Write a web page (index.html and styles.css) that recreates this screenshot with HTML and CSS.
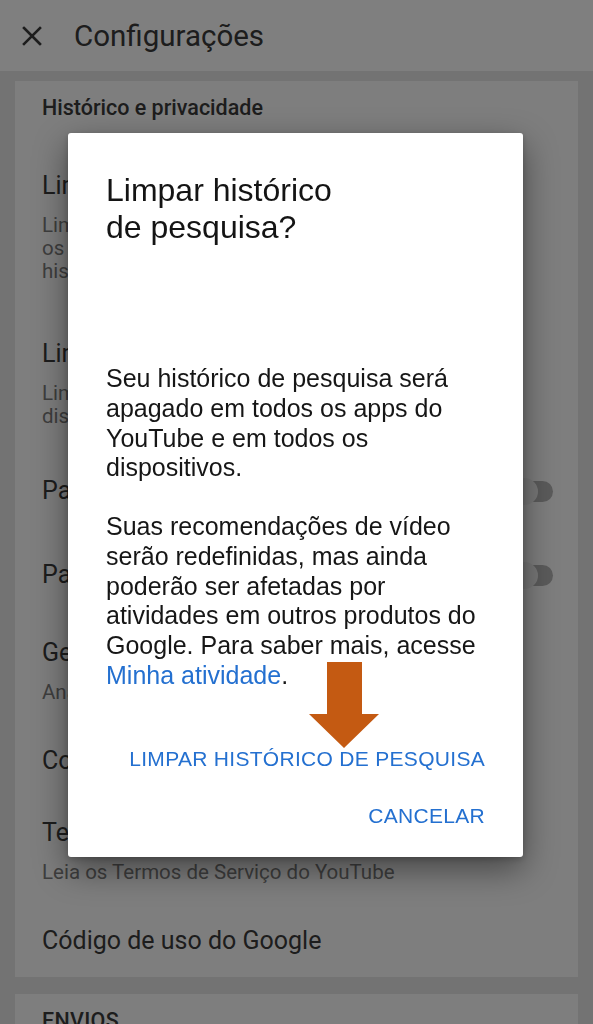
FILE: index.html
```html
<!DOCTYPE html>
<html lang="pt-BR">
<head>
<meta charset="utf-8">
<title>Configurações</title>
<link rel="stylesheet" href="styles.css">
</head>
<body>
<div class="app">
  <header class="appbar">
    <svg class="close-icon" viewBox="0 0 22 22" width="22" height="22" aria-hidden="true">
      <path d="M3 3 L19 19 M19 3 L3 19" stroke="#3a3a3a" stroke-width="2.6" stroke-linecap="square" fill="none"/>
    </svg>
    <h1 class="appbar-title">Configurações</h1>
  </header>

  <main class="content">
    <section class="card">
      <h2 class="card-head">Histórico e privacidade</h2>

      <div class="row row-first">
        <div class="row-text">
          <div class="row-title">Limpar histórico de exibição</div>
          <div class="row-sub">Limpa o histórico de exibição de todos os apps do<br>os dispositivos e redefine recomendações do vídeo<br>histórico de exibição</div>
        </div>
      </div>

      <div class="row">
        <div class="row-text">
          <div class="row-title">Limpar histórico de pesquisa</div>
          <div class="row-sub">Limpa as pesquisas de todos os apps e de todos os<br>dispositivos</div>
        </div>
      </div>

      <div class="row row-switch">
        <div class="row-text">
          <div class="row-title">Pausar histórico de exibição</div>
        </div>
        <span class="switch"><span class="switch-thumb"></span></span>
      </div>

      <div class="row row-switch">
        <div class="row-text">
          <div class="row-title">Pausar histórico de pesquisa</div>
        </div>
        <span class="switch"><span class="switch-thumb"></span></span>
      </div>

      <div class="row">
        <div class="row-text">
          <div class="row-title">Gerenciar todas as atividades</div>
          <div class="row-sub">Analise e gerencie as atividades da sua conta</div>
        </div>
      </div>

      <div class="row">
        <div class="row-text">
          <div class="row-title">Controles de dados do YouTube</div>
        </div>
      </div>

      <div class="row">
        <div class="row-text">
          <div class="row-title">Termos de Serviço do YouTube</div>
          <div class="row-sub">Leia os Termos de Serviço do YouTube</div>
        </div>
      </div>

      <div class="row">
        <div class="row-text">
          <div class="row-title">Código de uso do Google</div>
        </div>
      </div>
    </section>

    <section class="card">
      <h2 class="card-head card-head-caps">ENVIOS</h2>
      <div class="row">
        <div class="row-text">
          <div class="row-title">Qualidade do envio</div>
        </div>
      </div>
    </section>
  </main>
</div>

<div class="scrim"></div>

<div class="dialog" role="dialog">
  <h2 class="dialog-title">Limpar histórico de pesquisa?</h2>
  <div class="dialog-body">
    <p>Seu histórico de pesquisa será apagado em todos os apps do YouTube e em todos os dispositivos.</p>
    <p>Suas recomendações de vídeo serão redefinidas, mas ainda poderão ser afetadas por atividades em outros produtos do Google. Para saber mais, acesse <a class="link" href="#">Minha atividade</a>.</p>
  </div>
  <div class="actions">
    <button class="action-btn" type="button">LIMPAR HISTÓRICO DE PESQUISA</button>
    <button class="action-btn" type="button">CANCELAR</button>
  </div>
  <svg class="pointer-arrow" viewBox="0 0 70 86" width="70" height="86" aria-hidden="true">
    <polygon points="18,0 53,0 53,52 70,52 35,86 0,52 18,52" fill="#c45a12"/>
  </svg>
</div>
</body>
</html>
```

FILE: styles.css
```css
* { box-sizing: border-box; }

html, body {
  margin: 0;
  padding: 0;
}

body {
  width: 593px;
  height: 1024px;
  overflow: hidden;
  background: #e7e7e7;
  font-family: Roboto, "Noto Sans", "Liberation Sans", sans-serif;
  position: relative;
}

.appbar {
  height: 71px;
  background: #ffffff;
  display: flex;
  align-items: center;
  padding-left: 21px;
}

.close-icon {
  display: block;
  flex: none;
}

.appbar-title {
  margin: 0 0 0 31px;
  font-size: 29.5px;
  line-height: 36px;
  font-weight: 400;
  color: #3a3a3a;
}

.content {
  padding: 10px 15px;
  display: flex;
  flex-direction: column;
  gap: 17px;
}

.card {
  background: #fdfdfd;
}

.card-head {
  margin: 0;
  padding: 15px 27px 30px;
  font-size: 21.5px;
  line-height: 24px;
  font-weight: 500;
  color: #3a3a3a;
}

.card-head-caps {
  letter-spacing: 0.3px;
}

.row {
  display: flex;
  align-items: center;
  justify-content: space-between;
  padding: 21px 25px 21px 27px;
}

.row-first {
  padding-bottom: 35px;
}

.row-switch {
  padding-top: 27px;
  padding-bottom: 27px;
}

.row-title {
  font-size: 25px;
  line-height: 30px;
  color: #3a3a3a;
  white-space: nowrap;
}

.row-sub {
  margin-top: 13px;
  font-size: 20.5px;
  line-height: 23px;
  color: #7c7c7c;
  white-space: nowrap;
}

.switch {
  position: relative;
  width: 40px;
  height: 21px;
  border-radius: 11px;
  background: #b6b6b6;
  flex: none;
}

.switch-thumb {
  position: absolute;
  left: -2px;
  top: -3px;
  width: 27px;
  height: 27px;
  border-radius: 50%;
  background: #f1f1f1;
}

.scrim {
  position: fixed;
  inset: 0;
  background: rgba(0, 0, 0, 0.5);
}

.dialog {
  position: absolute;
  left: 68px;
  top: 133px;
  width: 455px;
  padding: 39px 38px 23px;
  background: #ffffff;
  border-radius: 3px;
  box-shadow: 0 12px 34px rgba(0, 0, 0, 0.45), 0 2px 6px rgba(0, 0, 0, 0.2);
  font-family: "Liberation Sans", Arial, sans-serif;
  color: #161616;
}

.dialog-title {
  margin: 0;
  max-width: 240px;
  font-size: 32px;
  line-height: 37px;
  font-weight: 400;
  color: #141414;
}

.dialog-body {
  margin-top: 118px;
}

.dialog-body p {
  margin: 0;
  font-size: 25px;
  line-height: 29.8px;
}

.dialog-body p + p {
  margin-top: 28.8px;
}

.link {
  color: #2470d0;
  text-decoration: none;
}

.actions {
  margin-top: 50px;
  display: flex;
  flex-direction: column;
  align-items: flex-end;
  gap: 21px;
}

.action-btn {
  margin: 0;
  padding: 0;
  border: 0;
  background: none;
  font-family: "Liberation Sans", Arial, sans-serif;
  font-size: 21px;
  line-height: 36px;
  letter-spacing: 0.3px;
  color: #2470d0;
}

.pointer-arrow {
  position: absolute;
  left: 241px;
  top: 529px;
  display: block;
}
```
